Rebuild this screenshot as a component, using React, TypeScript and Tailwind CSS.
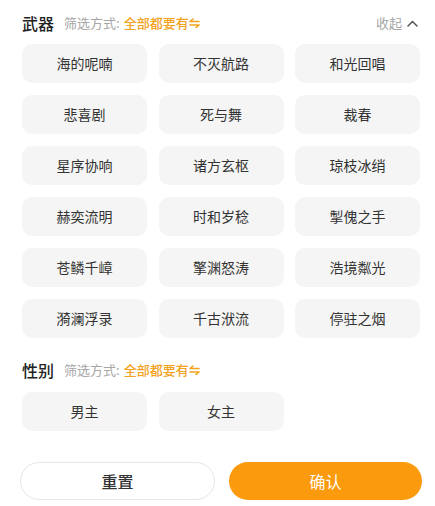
const weapons = [
  "海的呢喃", "不灭航路", "和光回唱",
  "悲喜剧", "死与舞", "裁春",
  "星序协响", "诸方玄枢", "琼枝冰绡",
  "赫奕流明", "时和岁稔", "掣傀之手",
  "苍鳞千嶂", "擎渊怒涛", "浩境粼光",
  "漪澜浮录", "千古洑流", "停驻之烟",
];

const genders = ["男主", "女主"];

function SwapIcon() {
  return (
    <svg width="11" height="10" viewBox="0 0 11 10" fill="none" stroke="#f2a21e" strokeWidth="1.6" strokeLinecap="round" strokeLinejoin="round">
      <path d="M1 3.5h9M1 3.5l3-2.5" />
      <path d="M1 7h9M10 7l-3 2.5" />
    </svg>
  );
}

function SectionHeader({ title, collapse }: { title: string; collapse?: boolean }) {
  return (
    <div className="flex h-5 items-center justify-between">
      <div className="flex items-center">
        <span className="text-[16px] font-medium text-[#222]">{title}</span>
        <span className="ml-[10px] text-[13px] text-[#a6a6a6]">筛选方式:</span>
        <span className="ml-[4px] text-[13px] font-medium text-[#f2a21e]">全部都要有</span>
        <SwapIcon />
      </div>
      {collapse && (
        <div className="mr-[2px] flex items-center gap-[5px] text-[13px] text-[#a6a6a6]">
          <span>收起</span>
          <svg width="11" height="7" viewBox="0 0 11 7" fill="none" stroke="#555" strokeWidth="1.5" strokeLinecap="round" strokeLinejoin="round">
            <path d="M1 6l4.5-4.5L10 6" />
          </svg>
        </div>
      )}
    </div>
  );
}

function Chip({ label }: { label: string }) {
  return (
    <div className="flex h-[39px] items-center justify-center rounded-[10px] bg-[#f5f5f5] text-[14px] text-[#333]">
      {label}
    </div>
  );
}

export default function App() {
  return (
    <div
      className="h-[506px] w-[435px] overflow-hidden bg-white"
      style={{ fontFamily: '"Noto Sans CJK SC", "Noto Sans", sans-serif' }}
    >
      <div className="pl-[22px] pr-[15px] pt-[13px]">
        <SectionHeader title="武器" collapse />
        <div className="mt-[11px] grid grid-cols-3 gap-x-[11.5px] gap-y-[12px]">
          {weapons.map((w) => (
            <Chip key={w} label={w} />
          ))}
        </div>

        <div className="mt-[22px]">
          <SectionHeader title="性别" />
        </div>
        <div className="mt-[12px] grid grid-cols-3 gap-x-[11.5px]">
          {genders.map((g) => (
            <Chip key={g} label={g} />
          ))}
        </div>
      </div>

      <div className="mt-[31px] flex gap-[14px] pl-[20px] pr-[13px]">
        <button className="flex h-[38px] flex-1 items-center justify-center rounded-full border border-[#e6e6e6] bg-white text-[16px] font-medium text-[#333]">
          重置
        </button>
        <button className="flex h-[38px] flex-1 items-center justify-center rounded-full bg-[#fb9a0c] text-[16px] text-white">
          确认
        </button>
      </div>
    </div>
  );
}
